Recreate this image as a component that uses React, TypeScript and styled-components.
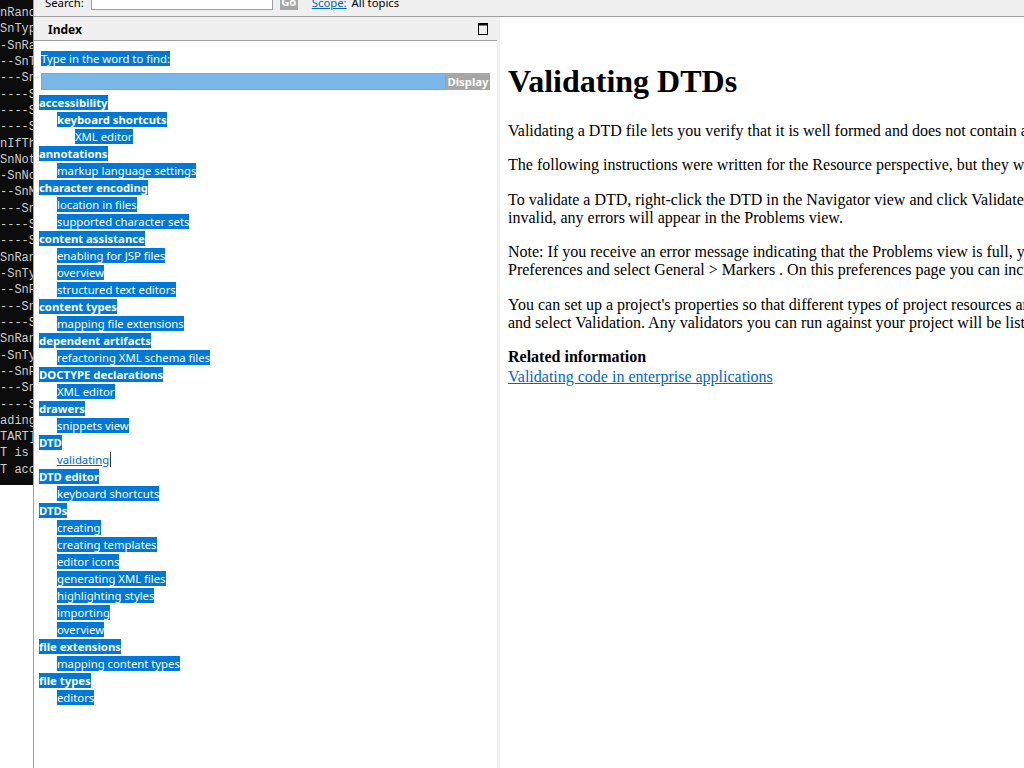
import React from 'react';
import styled, { createGlobalStyle } from 'styled-components';

type Entry = { level: number; text: string; bold?: boolean; link?: boolean };

const consoleLines = [
  'nRandom',
  'SnType',
  '-SnRange',
  '--SnType',
  '---SnProp',
  '----SnValue',
  '----SnValue',
  '----SnValue',
  'nIfThen',
  'SnNot',
  '-SnNot',
  '--SnMatch',
  '---SnProp',
  '----SnValue',
  '----SnValue',
  'SnRange',
  '-SnType',
  '--SnProp',
  '---SnProp',
  '----SnValue',
  'SnRange',
  '-SnType',
  '--SnProp',
  '---SnProp',
  '----SnValue',
  'ading done',
  'TART] ok',
  'T is ready',
  'T accepted',
];

const entries: Entry[] = [
  { level: 0, text: 'accessibility', bold: true },
  { level: 1, text: 'keyboard shortcuts', bold: true },
  { level: 2, text: 'XML editor' },
  { level: 0, text: 'annotations', bold: true },
  { level: 1, text: 'markup language settings' },
  { level: 0, text: 'character encoding', bold: true },
  { level: 1, text: 'location in files' },
  { level: 1, text: 'supported character sets' },
  { level: 0, text: 'content assistance', bold: true },
  { level: 1, text: 'enabling for JSP files' },
  { level: 1, text: 'overview' },
  { level: 1, text: 'structured text editors' },
  { level: 0, text: 'content types', bold: true },
  { level: 1, text: 'mapping file extensions' },
  { level: 0, text: 'dependent artifacts', bold: true },
  { level: 1, text: 'refactoring XML schema files' },
  { level: 0, text: 'DOCTYPE declarations', bold: true },
  { level: 1, text: 'XML editor' },
  { level: 0, text: 'drawers', bold: true },
  { level: 1, text: 'snippets view' },
  { level: 0, text: 'DTD', bold: true },
  { level: 1, text: 'validating', link: true },
  { level: 0, text: 'DTD editor', bold: true },
  { level: 1, text: 'keyboard shortcuts' },
  { level: 0, text: 'DTDs', bold: true },
  { level: 1, text: 'creating' },
  { level: 1, text: 'creating templates' },
  { level: 1, text: 'editor icons' },
  { level: 1, text: 'generating XML files' },
  { level: 1, text: 'highlighting styles' },
  { level: 1, text: 'importing' },
  { level: 1, text: 'overview' },
  { level: 0, text: 'file extensions', bold: true },
  { level: 1, text: 'mapping content types' },
  { level: 0, text: 'file types', bold: true },
  { level: 1, text: 'editors' },
];

const GlobalStyle = createGlobalStyle`
  html, body {
    margin: 0;
    padding: 0;
    background: #ffffff;
  }
  #root {
    height: 768px;
    overflow: hidden;
  }
`;

const uiFont = `"Noto Sans", "Open Sans", sans-serif`;

const Screen = styled.div`
  display: flex;
  height: 768px;
  width: 1024px;
  overflow: hidden;
`;

const Backdrop = styled.div`
  width: 33px;
  flex-shrink: 0;
  display: flex;
  flex-direction: column;
  background: #ffffff;
`;

const Terminal = styled.div`
  height: 485px;
  background: #0c0c0c;
  color: #cccccc;
  font-family: "Liberation Mono", "DejaVu Sans Mono", monospace;
  font-size: 12px;
  line-height: 16.32px;
  padding-top: 5px;
  box-sizing: border-box;
  overflow: hidden;
  white-space: pre;
`;

const HelpWindow = styled.div`
  flex: 1;
  display: flex;
  flex-direction: column;
  border-left: 1px solid #a0a0a0;
  min-width: 0;
`;

const Toolbar = styled.div`
  height: 10px;
  flex-shrink: 0;
  display: flex;
  align-items: flex-end;
  padding: 0 0 6px 11px;
  background: #f0f0f0;
  border-bottom: 1px solid #a0a0a0;
  overflow: hidden;
  font-family: ${uiFont};
  font-size: 11.3px;
`;

const ToolLabel = styled.span<{ $gap?: number }>`
  line-height: 15px;
  color: #000000;
  margin-right: ${(p) => p.$gap ?? 0}px;
  white-space: nowrap;
`;

const ToolLink = styled(ToolLabel)`
  color: #0066cc;
  text-decoration: underline;
`;

const SearchInput = styled.div`
  width: 182px;
  height: 20px;
  flex-shrink: 0;
  box-sizing: border-box;
  border: 1px solid #a0a0a0;
  background: #ffffff;
  margin-right: 7px;
`;

const GrayButton = styled.span`
  display: inline-flex;
  align-items: center;
  justify-content: center;
  background: #a6a6a6;
  color: #ffffff;
  font-family: ${uiFont};
  font-weight: 700;
  font-size: 11.3px;
  flex-shrink: 0;
`;

const GoButton = styled(GrayButton)`
  width: 18px;
  height: 18px;
  margin-right: 14px;
`;

const Body = styled.div`
  flex: 1;
  display: flex;
  min-height: 0;
`;

const IndexPane = styled.div`
  width: 463px;
  flex-shrink: 0;
  display: flex;
  flex-direction: column;
  background: #ffffff;
  font-family: ${uiFont};
  font-size: 11.3px;
`;

const PaneHeader = styled.div`
  height: 24px;
  flex-shrink: 0;
  display: flex;
  align-items: center;
  justify-content: space-between;
  padding: 1px 9px 0 14px;
  box-sizing: border-box;
  background: #f0f0f0;
  border-bottom: 1px solid #a0a0a0;
`;

const PaneTitle = styled.span`
  font-weight: 700;
  font-size: 12px;
  color: #000000;
`;

const IndexBody = styled.div`
  padding: 10px 7px 0 7px;
  display: flex;
  flex-direction: column;
`;

const Highlight = styled.span<{ $bold?: boolean }>`
  background: #0078d7;
  color: #ffffff;
  font-weight: ${(p) => (p.$bold ? 700 : 400)};
  white-space: nowrap;
`;

const FindLabel = styled.div`
  line-height: 16px;
`;

const FindRow = styled.div`
  display: flex;
  height: 17px;
  margin: 6px 0 4px 0;
`;

const FindInput = styled.div`
  flex: 1;
  box-sizing: border-box;
  border: 1px solid #a0a0a0;
  background: #7ab8ea;
`;

const DisplayButton = styled(GrayButton)`
  width: 44px;
  height: 17px;
`;

const Tree = styled.div`
  margin-left: -2px;
  display: flex;
  flex-direction: column;
`;

const TreeRow = styled.div<{ $level: number }>`
  height: 17px;
  line-height: 17px;
  padding-left: ${(p) => p.$level * 18}px;
`;

const TreeLink = styled.span`
  color: #0066cc;
  text-decoration: underline;
  border-right: 1px solid #333333;
  padding-right: 1px;
`;

const Divider = styled.div`
  width: 3px;
  flex-shrink: 0;
  background: #f0f0f0;
`;

const ContentPane = styled.div`
  flex: 1;
  min-width: 0;
  overflow: hidden;
  background: #ffffff;
  padding: 25px 0 0 8px;
  font-family: "Liberation Serif", "Times New Roman", serif;
  font-size: 16px;
  color: #000000;
  white-space: nowrap;
`;

const Title = styled.h1`
  font-size: 32px;
  font-weight: 700;
  margin: 21.44px 0;
`;

const Para = styled.p`
  margin: 16.5px 0;
`;

const RelatedTitle = styled.div`
  font-weight: 700;
  margin-top: 16.4px;
`;

const RelatedLink = styled.a`
  display: block;
  margin-top: 2px;
  color: #0066cc;
  text-decoration: underline;
  width: fit-content;
`;

const MaximizeIcon = () => (
  <svg width="10" height="12" viewBox="0 0 10 12">
    <rect x="0.5" y="0.5" width="9" height="11" fill="none" stroke="#000" strokeWidth="1" />
    <rect x="0" y="0" width="10" height="2.5" fill="#000" />
  </svg>
);

export default function App() {
  return (
    <Screen>
      <GlobalStyle />
      <Backdrop>
        <Terminal>{consoleLines.join('\n')}</Terminal>
      </Backdrop>
      <HelpWindow>
        <Toolbar>
          <ToolLabel $gap={7}>Search:</ToolLabel>
          <SearchInput />
          <GoButton>Go</GoButton>
          <ToolLink $gap={5}>Scope:</ToolLink>
          <ToolLabel>All topics</ToolLabel>
        </Toolbar>
        <Body>
          <IndexPane>
            <PaneHeader>
              <PaneTitle>Index</PaneTitle>
              <MaximizeIcon />
            </PaneHeader>
            <IndexBody>
              <FindLabel>
                <Highlight>Type in the word to find:</Highlight>
              </FindLabel>
              <FindRow>
                <FindInput />
                <DisplayButton>Display</DisplayButton>
              </FindRow>
              <Tree>
                {entries.map((e, i) => (
                  <TreeRow key={i} $level={e.level}>
                    {e.link ? (
                      <TreeLink>{e.text}</TreeLink>
                    ) : (
                      <Highlight $bold={e.bold}>{e.text}</Highlight>
                    )}
                  </TreeRow>
                ))}
              </Tree>
            </IndexBody>
          </IndexPane>
          <Divider />
          <ContentPane>
            <Title>Validating DTDs</Title>
            <Para>
              Validating a DTD file lets you verify that it is well formed and does not contain any errors.
            </Para>
            <Para>
              The following instructions were written for the Resource perspective, but they will also work in
              many other perspectives.
            </Para>
            <Para>
              To validate a DTD, right-click the DTD in the Navigator view and click Validate DTD File. If the DTD is
              <br />
              invalid, any errors will appear in the Problems view.
            </Para>
            <Para>
              Note: If you receive an error message indicating that the Problems view is full, you can increase the
              number of error messages allowed by selecting Window &gt;
              <br />
              Preferences and select General &gt; Markers . On this preferences page you can increase or decrease the
              number of visible items.
            </Para>
            <Para>
              You can set up a project's properties so that different types of project resources are validated. To
              do this, right-click the project in the Navigator view, select Properties
              <br />
              and select Validation. Any validators you can run against your project will be listed in the
              Validation page.
            </Para>
            <RelatedTitle>Related information</RelatedTitle>
            <RelatedLink href="#">Validating code in enterprise applications</RelatedLink>
          </ContentPane>
        </Body>
      </HelpWindow>
    </Screen>
  );
}
